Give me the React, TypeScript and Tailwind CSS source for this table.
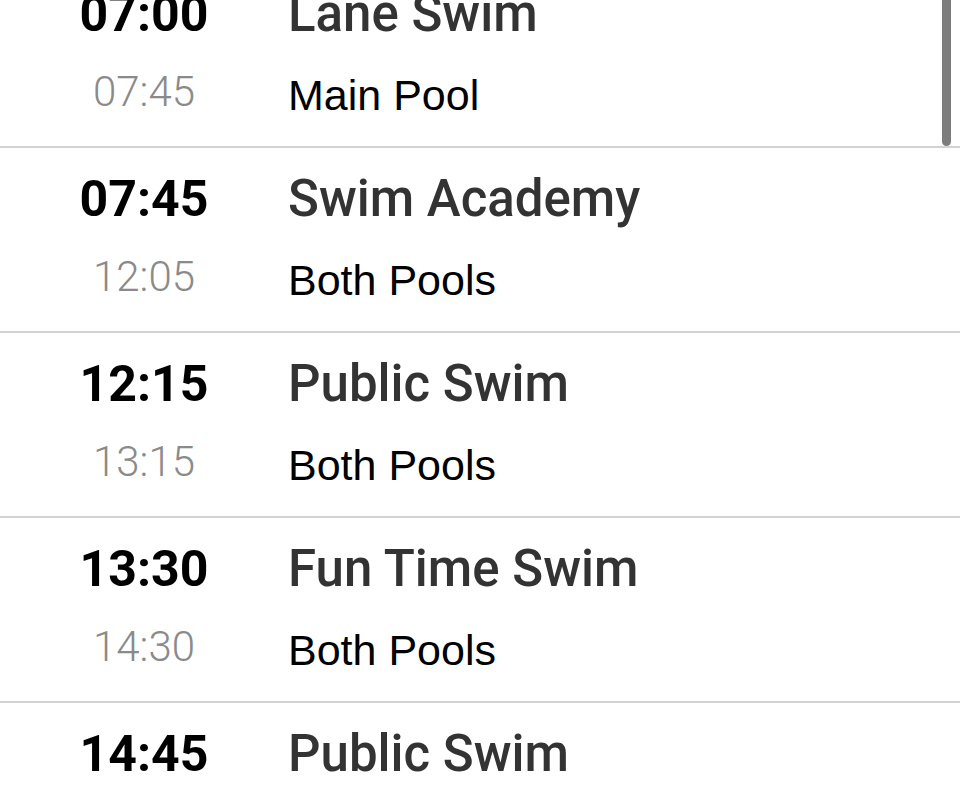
import React from 'react';

type Session = {
  start: string;
  end: string;
  title: string;
  place: string;
};

const sessions: Session[] = [
  { start: '07:00', end: '07:45', title: 'Lane Swim', place: 'Main Pool' },
  { start: '07:45', end: '12:05', title: 'Swim Academy', place: 'Both Pools' },
  { start: '12:15', end: '13:15', title: 'Public Swim', place: 'Both Pools' },
  { start: '13:30', end: '14:30', title: 'Fun Time Swim', place: 'Both Pools' },
  { start: '14:45', end: '15:45', title: 'Public Swim', place: 'Both Pools' },
];

const SessionRow: React.FC<{ session: Session }> = ({ session }) => (
  <div className="flex h-[185px] border-b-2 border-[#d2d2d2] pt-[21px]">
    <div className="w-[288px] shrink-0 text-center font-['Roboto',sans-serif]">
      <div className="text-[50px] leading-[60px] font-bold text-black">{session.start}</div>
      <div className="mt-[18px] text-[42px] leading-[60px] font-light text-[#8a8a8a]">{session.end}</div>
    </div>
    <div className="flex-1">
      <div className="font-['Roboto',sans-serif] text-[51px] leading-[60px] font-medium text-[#333333]">
        {session.title}
      </div>
      <div className="mt-[21px] font-['Liberation_Sans',Arial,sans-serif] text-[43px] leading-[60px] text-black">
        {session.place}
      </div>
    </div>
  </div>
);

const App: React.FC = () => {
  return (
    <div className="relative h-screen w-full overflow-hidden bg-white font-['Roboto',sans-serif]">
      <div className="-mt-[37px]">
        {sessions.map((s, i) => (
          <SessionRow key={i} session={s} />
        ))}
      </div>
      {/* scroll indicator */}
      <div className="absolute right-[9px] -top-[20px] h-[166px] w-[9px] rounded-full bg-[#7d7d7d]" />
    </div>
  );
};

export default App;
